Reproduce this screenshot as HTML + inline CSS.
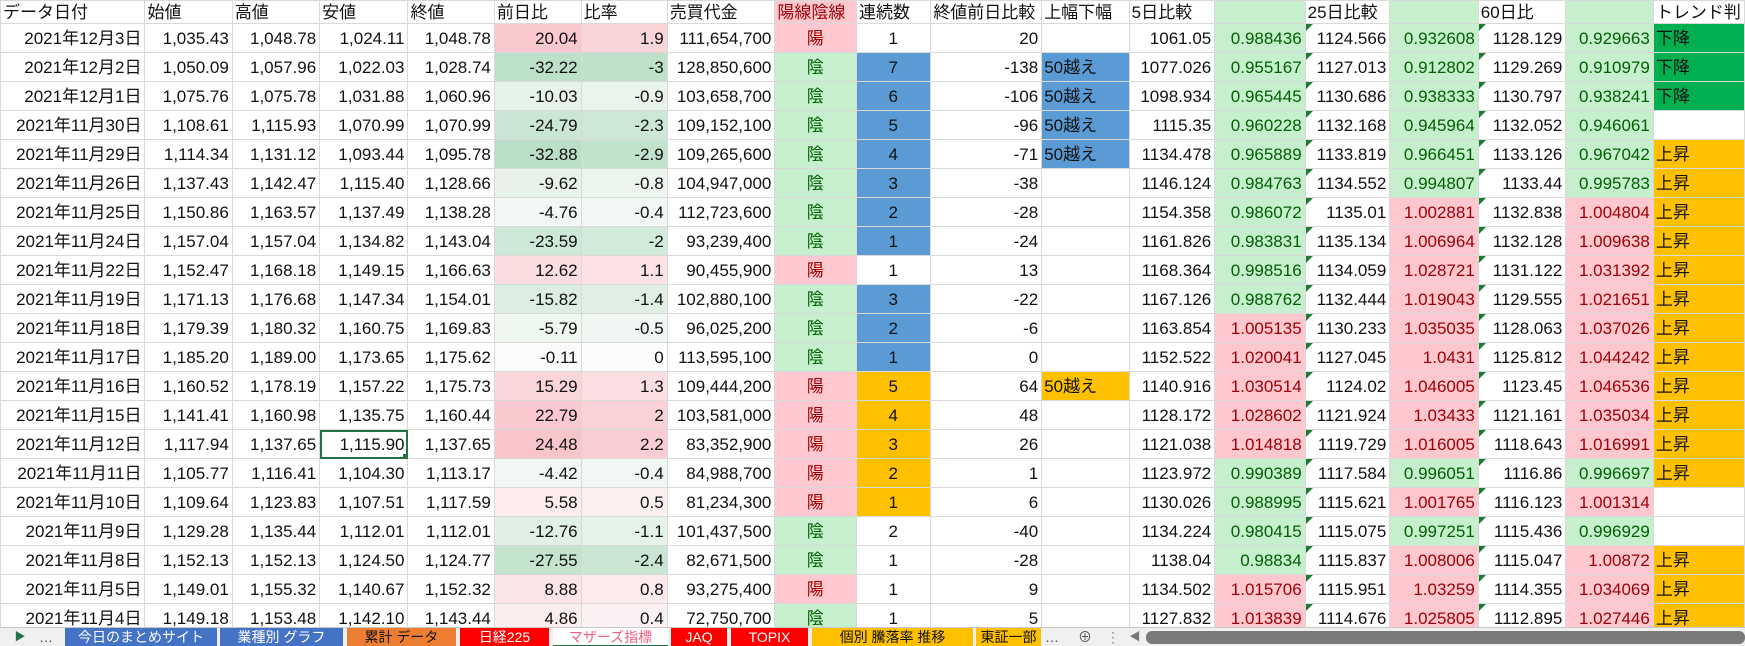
<!DOCTYPE html>
<html><head><meta charset="utf-8">
<style>
*{margin:0;padding:0;box-sizing:border-box}
html,body{width:1745px;height:646px;overflow:hidden;background:#fff}
body{font-family:"Liberation Sans","Noto Sans CJK JP",sans-serif;font-size:17px;color:#111;position:relative}
table{border-collapse:collapse;table-layout:fixed;position:absolute;left:0;top:0}
td{height:29px;border:1px solid #d9d9d9;text-align:right;padding:0 3px 0 2px;white-space:nowrap;overflow:hidden;position:relative;line-height:27px}
tr.h td{height:23px;text-align:left;line-height:21px;padding-left:2px}
.c{text-align:center}.l{text-align:left}
.p{background:#FFC7CE;color:#9C0006}
.g{background:#C6EFCE;color:#006100}
.b{background:#5B9BD5}
.y{background:#FFC000}
.t{background:#00B050}
.tri::before{content:"";position:absolute;left:0;top:0;border-top:7px solid #1E7B34;border-right:7px solid transparent}
.sel{outline:2px solid #217346;outline-offset:-2px}
.sel::after{content:"";position:absolute;right:-1px;bottom:-1px;width:5px;height:5px;background:#217346}
#tabs{position:absolute;left:0;top:627px;width:1745px;height:19px;background:#f0f0f0;border-top:1px solid #c8c8c8;font-size:14px}
#tabs div{position:absolute;top:0;height:19px;line-height:19px;text-align:center;color:#fff}
</style></head><body>
<table>
<colgroup><col style="width:145px"><col style="width:88px"><col style="width:88px"><col style="width:89px"><col style="width:87px"><col style="width:88px"><col style="width:88px"><col style="width:108px"><col style="width:82px"><col style="width:75px"><col style="width:111px"><col style="width:88px"><col style="width:86px"><col style="width:91px"><col style="width:85px"><col style="width:89px"><col style="width:88px"><col style="width:88px"><col style="width:81px"></colgroup>
<tr class="h"><td>データ日付</td><td>始値</td><td>高値</td><td>安値</td><td>終値</td><td>前日比</td><td>比率</td><td>売買代金</td><td class="p">陽線陰線</td><td>連続数</td><td>終値前日比較</td><td>上幅下幅</td><td>5日比較</td><td class="g"></td><td>25日比較</td><td class="g"></td><td>60日比</td><td class="g"></td><td>トレンド判</td></tr>
<tr><td>2021年12月3日</td><td>1,035.43</td><td>1,048.78</td><td>1,024.11</td><td>1,048.78</td><td style="background:#F9C9CD">20.04</td><td style="background:#FAD5D8">1.9</td><td>111,654,700</td><td class="p c">陽</td><td class="c">1</td><td>20</td><td></td><td>1061.05</td><td class="g">0.988436</td><td class="tri">1124.566</td><td class="g">0.932608</td><td class="tri">1128.129</td><td class="g">0.929663</td><td class="t l">下降</td></tr>
<tr><td>2021年12月2日</td><td>1,050.09</td><td>1,057.96</td><td>1,022.03</td><td>1,028.74</td><td style="background:#BCE0C8">-32.22</td><td style="background:#BFE1CA">-3</td><td>128,850,600</td><td class="g c">陰</td><td class="b c">7</td><td>-138</td><td class="b l">50越え</td><td>1077.026</td><td class="g">0.955167</td><td class="tri">1127.013</td><td class="g">0.912802</td><td class="tri">1129.269</td><td class="g">0.910979</td><td class="t l">下降</td></tr>
<tr><td>2021年12月1日</td><td>1,075.76</td><td>1,075.78</td><td>1,031.88</td><td>1,060.96</td><td style="background:#E6F3EA">-10.03</td><td style="background:#E9F4EC">-0.9</td><td>103,658,700</td><td class="g c">陰</td><td class="b c">6</td><td>-106</td><td class="b l">50越え</td><td>1098.934</td><td class="g">0.965445</td><td class="tri">1130.686</td><td class="g">0.938333</td><td class="tri">1130.797</td><td class="g">0.938241</td><td class="t l">下降</td></tr>
<tr><td>2021年11月30日</td><td>1,108.61</td><td>1,115.93</td><td>1,070.99</td><td>1,070.99</td><td style="background:#CAE7D3">-24.79</td><td style="background:#CCE7D5">-2.3</td><td>109,152,100</td><td class="g c">陰</td><td class="b c">5</td><td>-96</td><td class="b l">50越え</td><td>1115.35</td><td class="g">0.960228</td><td class="tri">1132.168</td><td class="g">0.945964</td><td class="tri">1132.052</td><td class="g">0.946061</td><td></td></tr>
<tr><td>2021年11月29日</td><td>1,114.34</td><td>1,131.12</td><td>1,093.44</td><td>1,095.78</td><td style="background:#BADFC6">-32.88</td><td style="background:#C1E2CB">-2.9</td><td>109,265,600</td><td class="g c">陰</td><td class="b c">4</td><td>-71</td><td class="b l">50越え</td><td>1134.478</td><td class="g">0.965889</td><td class="tri">1133.819</td><td class="g">0.966451</td><td class="tri">1133.126</td><td class="g">0.967042</td><td class="y l">上昇</td></tr>
<tr><td>2021年11月26日</td><td>1,137.43</td><td>1,142.47</td><td>1,115.40</td><td>1,128.66</td><td style="background:#E7F3EA">-9.62</td><td style="background:#EBF5EE">-0.8</td><td>104,947,000</td><td class="g c">陰</td><td class="b c">3</td><td>-38</td><td></td><td>1146.124</td><td class="g">0.984763</td><td class="tri">1134.552</td><td class="g">0.994807</td><td class="tri">1133.44</td><td class="g">0.995783</td><td class="y l">上昇</td></tr>
<tr><td>2021年11月25日</td><td>1,150.86</td><td>1,163.57</td><td>1,137.49</td><td>1,138.28</td><td style="background:#F1F8F3">-4.76</td><td style="background:#F1F8F3">-0.4</td><td>112,723,600</td><td class="g c">陰</td><td class="b c">2</td><td>-28</td><td></td><td>1154.358</td><td class="g">0.986072</td><td class="tri">1135.01</td><td class="p">1.002881</td><td class="tri">1132.838</td><td class="p">1.004804</td><td class="y l">上昇</td></tr>
<tr><td>2021年11月24日</td><td>1,157.04</td><td>1,157.04</td><td>1,134.82</td><td>1,143.04</td><td style="background:#CDE8D6">-23.59</td><td style="background:#D1EAD9">-2</td><td>93,239,400</td><td class="g c">陰</td><td class="b c">1</td><td>-24</td><td></td><td>1161.826</td><td class="g">0.983831</td><td class="tri">1135.134</td><td class="p">1.006964</td><td class="tri">1132.128</td><td class="p">1.009638</td><td class="y l">上昇</td></tr>
<tr><td>2021年11月22日</td><td>1,152.47</td><td>1,168.18</td><td>1,149.15</td><td>1,166.63</td><td style="background:#FBDDE0">12.62</td><td style="background:#FBE2E4">1.1</td><td>90,455,900</td><td class="p c">陽</td><td class="c">1</td><td>13</td><td></td><td>1168.364</td><td class="g">0.998516</td><td class="tri">1134.059</td><td class="p">1.028721</td><td class="tri">1131.122</td><td class="p">1.031392</td><td class="y l">上昇</td></tr>
<tr><td>2021年11月19日</td><td>1,171.13</td><td>1,176.68</td><td>1,147.34</td><td>1,154.01</td><td style="background:#DBEEE1">-15.82</td><td style="background:#DFEFE4">-1.4</td><td>102,880,100</td><td class="g c">陰</td><td class="b c">3</td><td>-22</td><td></td><td>1167.126</td><td class="g">0.988762</td><td class="tri">1132.444</td><td class="p">1.019043</td><td class="tri">1129.555</td><td class="p">1.021651</td><td class="y l">上昇</td></tr>
<tr><td>2021年11月18日</td><td>1,179.39</td><td>1,180.32</td><td>1,160.75</td><td>1,169.83</td><td style="background:#EFF7F1">-5.79</td><td style="background:#F0F7F2">-0.5</td><td>96,025,200</td><td class="g c">陰</td><td class="b c">2</td><td>-6</td><td></td><td>1163.854</td><td class="p">1.005135</td><td class="tri">1130.233</td><td class="p">1.035035</td><td class="tri">1128.063</td><td class="p">1.037026</td><td class="y l">上昇</td></tr>
<tr><td>2021年11月17日</td><td>1,185.20</td><td>1,189.00</td><td>1,173.65</td><td>1,175.62</td><td style="background:#FBFBFD">-0.11</td><td style="background:#FCFCFE">0</td><td>113,595,100</td><td class="g c">陰</td><td class="b c">1</td><td>0</td><td></td><td>1152.522</td><td class="p">1.020041</td><td class="tri">1127.045</td><td class="p">1.0431</td><td class="tri">1125.812</td><td class="p">1.044242</td><td class="y l">上昇</td></tr>
<tr><td>2021年11月16日</td><td>1,160.52</td><td>1,178.19</td><td>1,157.22</td><td>1,175.73</td><td style="background:#FAD6D9">15.29</td><td style="background:#FBDEE1">1.3</td><td>109,444,200</td><td class="p c">陽</td><td class="y c">5</td><td>64</td><td class="y l">50越え</td><td>1140.916</td><td class="p">1.030514</td><td class="tri">1124.02</td><td class="p">1.046005</td><td class="tri">1123.45</td><td class="p">1.046536</td><td class="y l">上昇</td></tr>
<tr><td>2021年11月15日</td><td>1,141.41</td><td>1,160.98</td><td>1,135.75</td><td>1,160.44</td><td style="background:#F9C9CD">22.79</td><td style="background:#FAD1D5">2</td><td>103,581,000</td><td class="p c">陽</td><td class="y c">4</td><td>48</td><td></td><td>1128.172</td><td class="p">1.028602</td><td class="tri">1121.924</td><td class="p">1.03433</td><td class="tri">1121.161</td><td class="p">1.035034</td><td class="y l">上昇</td></tr>
<tr><td>2021年11月12日</td><td>1,117.94</td><td>1,137.65</td><td class="sel">1,115.90</td><td>1,137.65</td><td style="background:#F8C5CA">24.48</td><td style="background:#F9CDD1">2.2</td><td>83,352,900</td><td class="p c">陽</td><td class="y c">3</td><td>26</td><td></td><td>1121.038</td><td class="p">1.014818</td><td class="tri">1119.729</td><td class="p">1.016005</td><td class="tri">1118.643</td><td class="p">1.016991</td><td class="y l">上昇</td></tr>
<tr><td>2021年11月11日</td><td>1,105.77</td><td>1,116.41</td><td>1,104.30</td><td>1,113.17</td><td style="background:#F1F8F3">-4.42</td><td style="background:#F1F8F3">-0.4</td><td>84,988,700</td><td class="p c">陽</td><td class="y c">2</td><td>1</td><td></td><td>1123.972</td><td class="g">0.990389</td><td class="tri">1117.584</td><td class="g">0.996051</td><td class="tri">1116.86</td><td class="g">0.996697</td><td class="y l">上昇</td></tr>
<tr><td>2021年11月10日</td><td>1,109.64</td><td>1,123.83</td><td>1,107.51</td><td>1,117.59</td><td style="background:#FCECEE">5.58</td><td style="background:#FCEFF0">0.5</td><td>81,234,300</td><td class="p c">陽</td><td class="y c">1</td><td>6</td><td></td><td>1130.026</td><td class="g">0.988995</td><td class="tri">1115.621</td><td class="p">1.001765</td><td class="tri">1116.123</td><td class="p">1.001314</td><td></td></tr>
<tr><td>2021年11月9日</td><td>1,129.28</td><td>1,135.44</td><td>1,112.01</td><td>1,112.01</td><td style="background:#E1F0E6">-12.76</td><td style="background:#E4F2E8">-1.1</td><td>101,437,500</td><td class="g c">陰</td><td class="c">2</td><td>-40</td><td></td><td>1134.224</td><td class="g">0.980415</td><td class="tri">1115.075</td><td class="g">0.997251</td><td class="tri">1115.436</td><td class="g">0.996929</td><td></td></tr>
<tr><td>2021年11月8日</td><td>1,152.13</td><td>1,152.13</td><td>1,124.50</td><td>1,124.77</td><td style="background:#C4E4CE">-27.55</td><td style="background:#CAE6D3">-2.4</td><td>82,671,500</td><td class="g c">陰</td><td class="c">1</td><td>-28</td><td></td><td>1138.04</td><td class="g">0.98834</td><td class="tri">1115.837</td><td class="p">1.008006</td><td class="tri">1115.047</td><td class="p">1.00872</td><td class="y l">上昇</td></tr>
<tr><td>2021年11月5日</td><td>1,149.01</td><td>1,155.32</td><td>1,140.67</td><td>1,152.32</td><td style="background:#FBE5E7">8.88</td><td style="background:#FCEBED">0.8</td><td>93,275,400</td><td class="p c">陽</td><td class="c">1</td><td>9</td><td></td><td>1134.502</td><td class="p">1.015706</td><td class="tri">1115.951</td><td class="p">1.03259</td><td class="tri">1114.355</td><td class="p">1.034069</td><td class="y l">上昇</td></tr>
<tr><td>2021年11月4日</td><td>1,149.18</td><td>1,153.48</td><td>1,142.10</td><td>1,143.44</td><td style="background:#FCEEEF">4.86</td><td style="background:#FCF1F2">0.4</td><td>72,750,700</td><td class="g c">陰</td><td class="c">1</td><td>5</td><td></td><td>1127.832</td><td class="p">1.013839</td><td class="tri">1114.676</td><td class="p">1.025805</td><td class="tri">1112.895</td><td class="p">1.027446</td><td class="y l">上昇</td></tr>
</table>
<div id="tabs">
<div style="left:14px;width:12px;color:#217346;font-size:11px">▶</div>
<div style="left:38px;width:16px;color:#444">…</div>
<div style="left:65px;width:152px;background:#4472C4">今日のまとめサイト</div>
<div style="left:220px;width:123px;background:#4472C4">業種別 グラフ</div>
<div style="left:347px;width:109px;background:#ED7D31;color:#111">累計 データ</div>
<div style="left:460px;width:89px;background:#FF0000">日経225</div>
<div style="left:553px;width:115px;background:#fff;color:#F06080;border-bottom:2px solid #217346">マザーズ指標</div>
<div style="left:671px;width:56px;background:#FF0000">JAQ</div>
<div style="left:731px;width:77px;background:#FF0000">TOPIX</div>
<div style="left:812px;width:161px;background:#FFC000;color:#111">個別 騰落率 推移</div>
<div style="left:976px;width:65px;background:#FFC000;color:#111;overflow:hidden">東証一部</div>
<div style="left:1044px;width:16px;color:#444">…</div>
<div style="left:1076px;width:18px;color:#555">⊕</div>
<div style="left:1106px;width:12px;color:#888">⋮</div>
<div style="left:1128px;width:14px;color:#777;font-size:11px">◀</div>
<div style="left:1146px;width:599px;top:3px;height:13px;background:#7a7a7a;border-radius:6px"></div>
</div>
</body></html>
